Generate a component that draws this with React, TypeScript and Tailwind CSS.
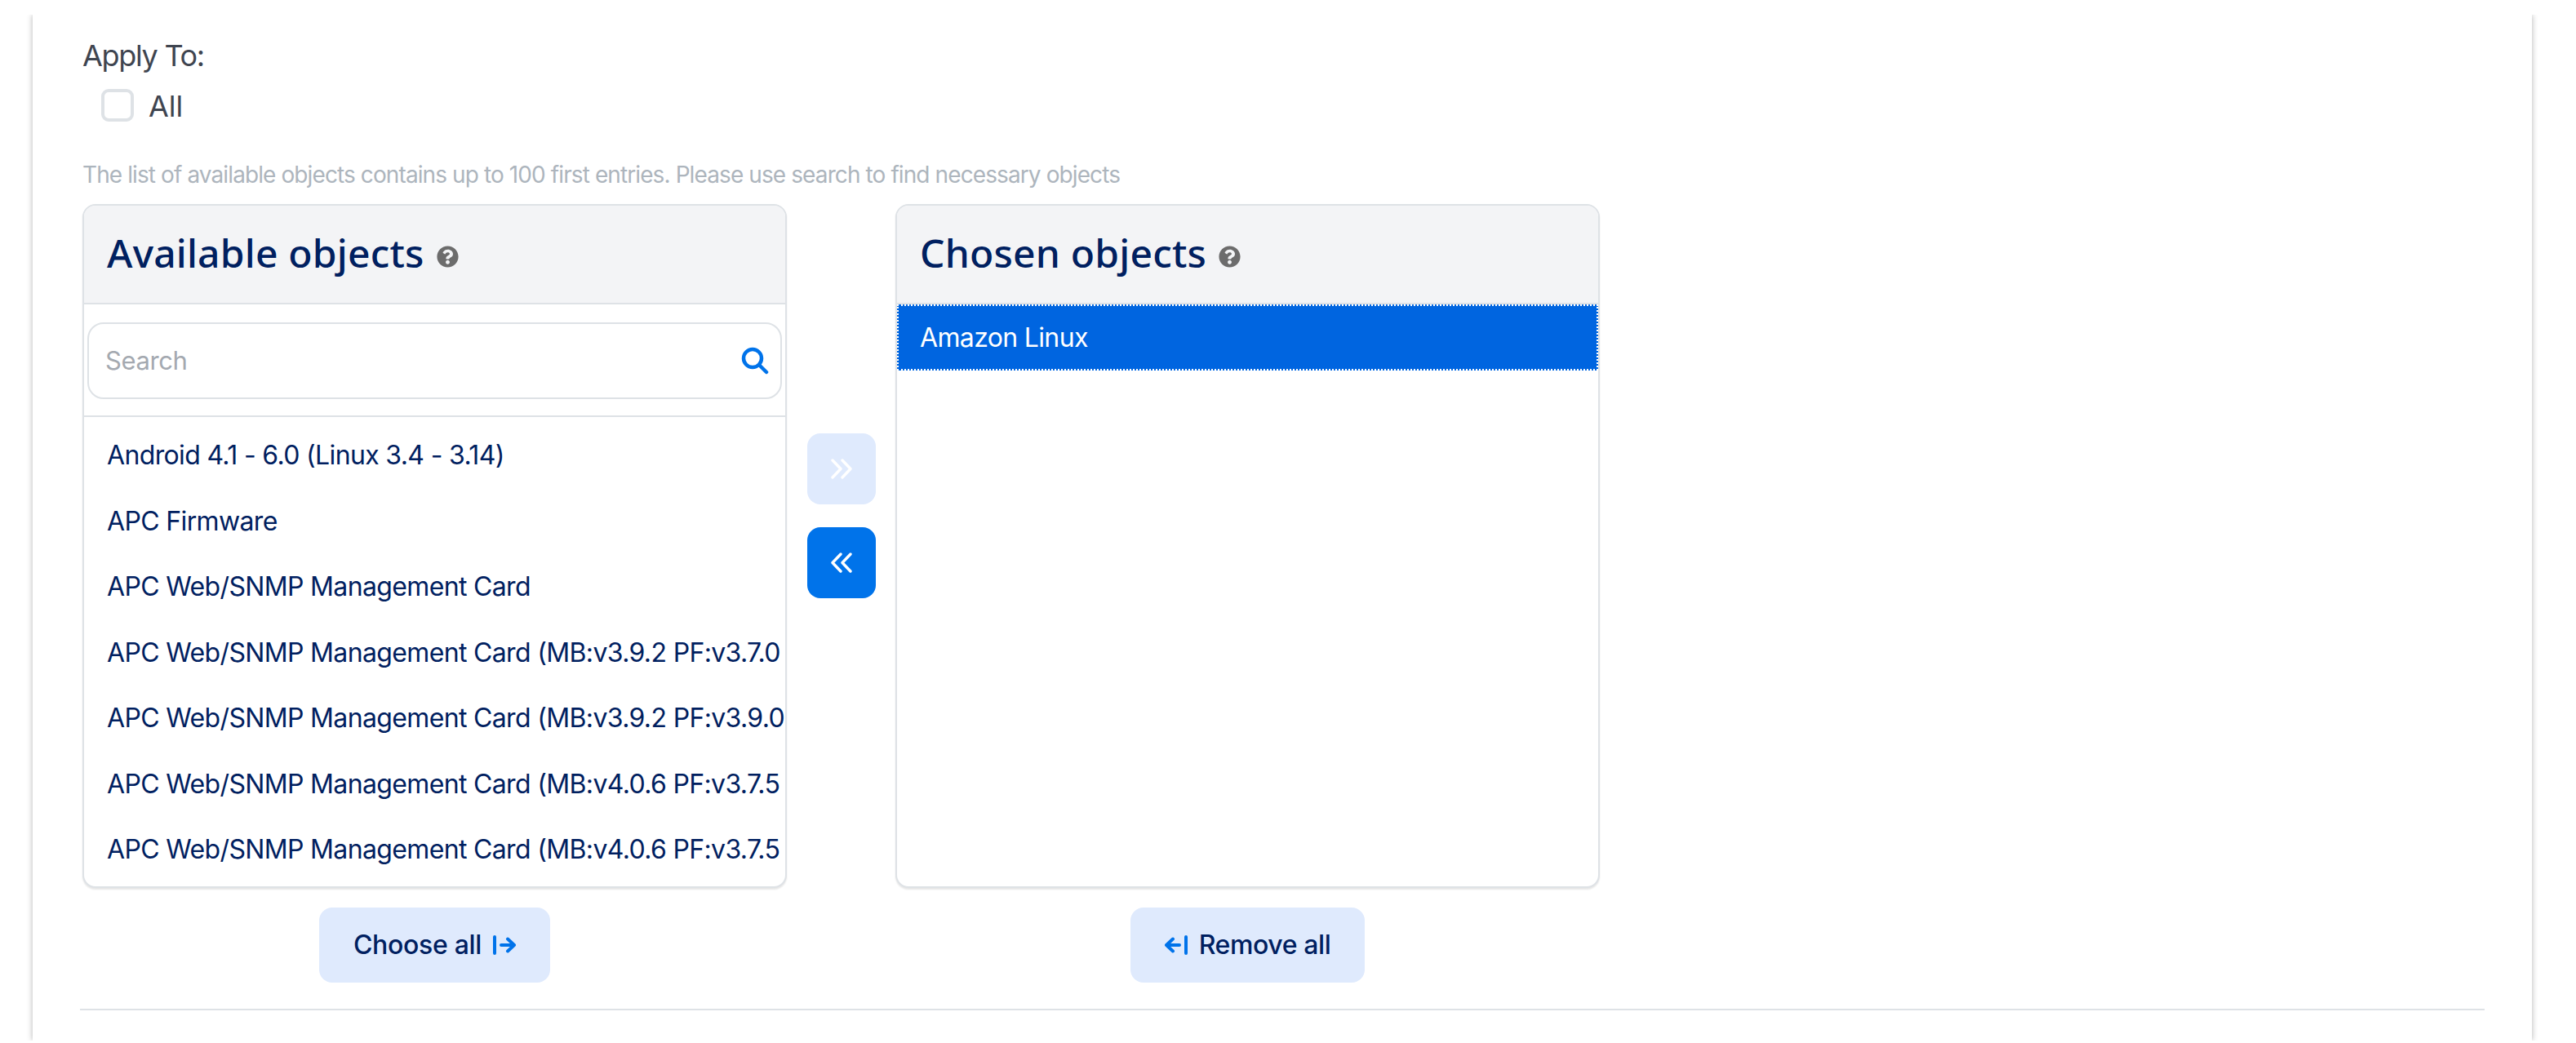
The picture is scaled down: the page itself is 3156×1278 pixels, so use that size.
import React from 'react'
import { FaQuestionCircle } from 'react-icons/fa'

const available = [
  'Android 4.1 - 6.0 (Linux 3.4 - 3.14)',
  'APC Firmware',
  'APC Web/SNMP Management Card',
  'APC Web/SNMP Management Card (MB:v3.9.2 PF:v3.7.0 PN:apc_hw05_aos_370.bin)',
  'APC Web/SNMP Management Card (MB:v3.9.2 PF:v3.9.0 PN:apc_hw05_aos_390.bin)',
  'APC Web/SNMP Management Card (MB:v4.0.6 PF:v3.7.5 PN:apc_hw05_aos_375.bin)',
  'APC Web/SNMP Management Card (MB:v4.0.6 PF:v3.7.5 PN:apc_hw06_aos_375.bin)',
]

function CardHeader({ title }: { title: string }) {
  return (
    <div className="flex h-[121px] shrink-0 items-center gap-[15px] border-b-2 border-[#dee2e6] bg-[#f3f4f6] pb-[4px] pl-[28px]">
      <h3 className="font-['Noto_Sans',sans-serif] text-[48px] leading-none font-medium tracking-[0.2px] text-[#002060]">{title}</h3>
      <FaQuestionCircle className="mt-[10px] text-[27px] text-[#6c6c6c]" />
    </div>
  )
}

function Chevrons({ left = false }: { left?: boolean }) {
  return (
    <svg width="26" height="25" viewBox="0 0 26 25" fill="none" stroke="currentColor" strokeWidth="3.4" strokeLinecap="round" strokeLinejoin="round">
      {left ? (
        <path d="M12 2 2 12.5 12 23M24 2 14 12.5 24 23" />
      ) : (
        <path d="M2 2l10 10.500L2 23M14 2l10 10.500L14 23" />
      )}
    </svg>
  )
}

export default function App() {
  return (
    <div className="h-[1278px] w-full overflow-hidden bg-white pt-[18px] font-['Inter',sans-serif]">
      <div className="h-[1257px] overflow-hidden pl-[40px]">
        <div className="h-full w-[3062px] bg-white pt-[32px] pl-[61px] shadow-[0_0_7px_rgba(0,0,0,0.3)]">
          <div className="text-[36px] leading-[36px] tracking-[-1.3px] text-[#3f4550]">Apply To:</div>
          <label className="mt-[23px] ml-[23px] flex items-center gap-[18px]">
            <span className="h-[40px] w-[40px] rounded-[9px] border-[4px] border-[#dee2e6] bg-white" />
            <span className="h-[40px] pt-[2px] text-[36px] leading-[38px] text-[#3f4550]">All</span>
          </label>
          <div className="mt-[49px] text-[28px] leading-[32px] tracking-[-0.9px] text-[#adb5bd]">
            The list of available objects contains up to 100 first entries. Please use search to find necessary objects
          </div>

          <div className="mt-[20px] flex items-start">
            <div className="flex w-[863px] flex-col items-center">
              <div className="flex h-[838px] w-full flex-col overflow-hidden rounded-[16px] border-2 border-[#dee2e6] bg-white shadow-[0_2px_2px_rgba(0,0,0,0.1)]">
                <CardHeader title="Available objects" />
                <div className="border-b-2 border-[#dee2e6] px-[4px] pt-[22px] pb-[20px]">
                  <div className="flex h-[94px] items-center justify-between rounded-[20px] border-2 border-[#dee2e6] pr-[14px] pl-[20px]">
                    <span className="text-[31px] tracking-[-0.4px] text-[#a4a9b0]">Search</span>
                    <svg width="34" height="34" viewBox="0 0 34 34" fill="none" stroke="#0073ea" strokeWidth="4.500" strokeLinecap="round">
                      <circle cx="14" cy="14" r="11" />
                      <path d="M22.500 22.500 31 31" />
                    </svg>
                  </div>
                </div>
                <div className="pt-[7px]">
                  {available.map((name) => (
                    <div key={name} className="flex h-[80.5px] items-center pl-[28px] text-[32px] tracking-[-0.65px] whitespace-nowrap text-[#002060]">
                      {name}
                    </div>
                  ))}
                </div>
              </div>
              <button className="mt-[24px] flex h-[92px] w-[283px] items-center justify-center gap-[14px] rounded-[16px] bg-[#dfeafd] text-[32px] font-medium tracking-[-0.3px] text-[#002060]">
                Choose all
                <svg width="28" height="24" viewBox="0 0 28 24" fill="none" stroke="#0073ea" strokeWidth="4" strokeLinecap="round" strokeLinejoin="round">
                  <path d="M2 2v20M10 12h16M18 4.500 26 12l-8 7.500" />
                </svg>
              </button>
            </div>

            <div className="flex w-[133px] flex-col items-center gap-[28px] pt-[281px]">
              <button className="flex h-[87px] w-[84px] items-center justify-center rounded-[16px] bg-[#dfeafd] text-white">
                <Chevrons />
              </button>
              <button className="flex h-[87px] w-[84px] items-center justify-center rounded-[16px] bg-[#0073ea] text-white">
                <Chevrons left />
              </button>
            </div>

            <div className="flex w-[863px] flex-col items-center">
              <div className="flex h-[838px] w-full flex-col overflow-hidden rounded-[16px] border-2 border-[#dee2e6] bg-white shadow-[0_2px_2px_rgba(0,0,0,0.1)]">
                <CardHeader title="Chosen objects" />
                <div className="flex h-[81px] items-center border-2 border-dotted border-white bg-[#0065e0] pl-[26px] text-[32px] tracking-[-0.65px] text-white">
                  Amazon Linux
                </div>
              </div>
              <button className="mt-[24px] flex h-[92px] w-[287px] items-center justify-center gap-[14px] rounded-[16px] bg-[#dfeafd] text-[32px] font-medium tracking-[-0.4px] text-[#002060]">
                <svg width="28" height="24" viewBox="0 0 28 24" fill="none" stroke="#0073ea" strokeWidth="4" strokeLinecap="round" strokeLinejoin="round">
                  <path d="M26 2v20M18 12H2M10 4.500 2 12l8 7.500" />
                </svg>
                Remove all
              </button>
            </div>
          </div>

          <div className="mt-[32px] -ml-[3px] h-[2px] w-[2946px] bg-[#dee2e6]" />
        </div>
      </div>
    </div>
  )
}
